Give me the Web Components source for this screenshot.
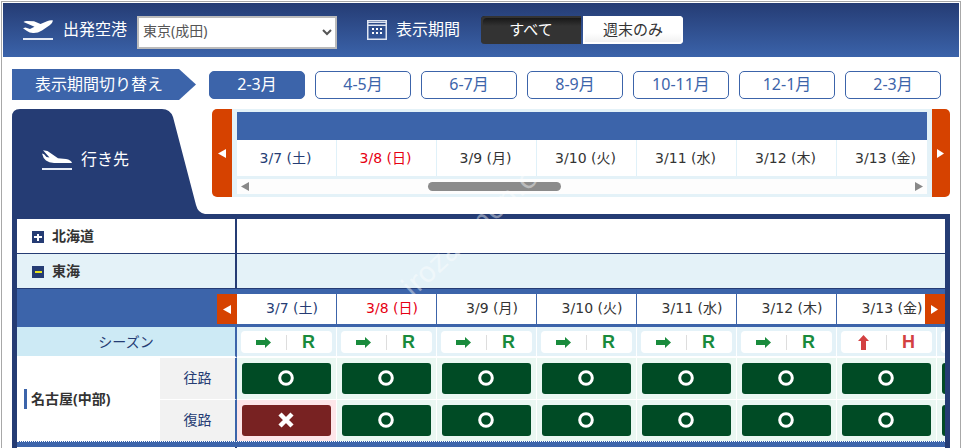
<!DOCTYPE html>
<html lang="ja">
<head>
<meta charset="utf-8">
<title>航空券カレンダー</title>
<style>
:root{--navy:#253c74;--blue:#3c64aa;--orange:#d64200;--pale:#e4f2f8;--line:#e0f1f9}
body{margin:0;background:#fff;color:#333;font:14px/20px "Noto Sans","Noto Sans CJK JP",sans-serif}
</style>
</head>
<body>
<flight-page></flight-page>
<script>
const define = (name, html) => customElements.define(name, class extends HTMLElement {
  connectedCallback() {
    if (this.shadowRoot) return;
    const t = document.createElement('template');
    t.innerHTML = typeof html === 'function' ? html(this) : html;
    this.attachShadow({mode: 'open'}).append(t.content.cloneNode(true));
  }
});

const days = [['3/7','土','sat'],['3/8','日','sun'],['3/9','月',''],['3/10','火',''],['3/11','水',''],['3/12','木',''],['3/13','金','']];

define('plane-icon', el => `
<style>:host{display:block;width:30px;height:20px;flex:none}svg{display:block}</style>
<svg width="30" height="20" viewBox="0 0 30 20" fill="#fff" aria-hidden="true">
${el.getAttribute('kind') === 'up'
 ? '<path d="M.5 2Q2 .8 4 1L11 1.300 17.500 4 24 1.200Q27 0 30 .4 29.500 3 27 5L19 10.500Q14.500 13.300 10 13 6.500 12.800 4 11L0 8.300 2.500 7.400 7 9 11.500 6.800Z"/>'
 : '<path d="M1 .2L5.500 .9 16 8.300 24 9Q29 9.800 30 13H12Q7 12.800 4 10.500 1 8 0 3.500L2 4.200 4.500 7 7.500 7.600Z"/>'}
<path fill="#e6ebf5" d="M0 18h30v2H0z"/></svg>`);

define('calendar-icon', `
<style>:host{display:block;width:20px;height:20px;flex:none}svg{display:block}</style>
<svg width="20" height="20" aria-hidden="true"><path d="M.75.75h18.5v18.5H.75z" fill="none" stroke="#dfe5f2" stroke-width="1.5"/><path d="M1 2h18v1H1zM1 4.5h18V6H1z" fill="#dfe5f2"/><path fill="#fff" d="M5 8h2v2H5zM9 8h2v2H9zM13 8h2v2h-2zM5 12h2v2H5zM9 12h2v2H9zM13 12h2v2h-2z"/></svg>`);

define('search-bar', `
<style>
:host{display:flex;align-items:center;height:54px;padding:0 20px;background:linear-gradient(var(--navy),#3b63aa);color:#fff;font-size:16px}
plane-icon{margin-right:10px}
label,span{padding-bottom:2px}
select{width:200px;height:33px;margin:4px 30px 0 10px;padding:0 0 3px;border:2px solid #bbb;background:#fff;color:#555;font:14px "Noto Sans","Noto Sans CJK JP",sans-serif}
calendar-icon{margin-right:9px}
.group{display:flex;gap:2px;margin-left:21px}
button{width:100px;height:28px;padding:0 0 3px;border:0;font:15px/20px "Noto Sans","Noto Sans CJK JP",sans-serif}
.on{background:linear-gradient(#111,#333 10px);box-shadow:inset 2px 2px #333;color:#fff;border-radius:4px 0 0 4px}
.off{background:linear-gradient(#fff 60%,#eee);box-shadow:inset 0 0 0 2px #fff;color:#333;border-radius:0 4px 4px 0}
</style>
<plane-icon kind="up"></plane-icon><label for="from">出発空港</label>
<select id="from"><option>東京(成田)</option></select>
<calendar-icon></calendar-icon><span>表示期間</span>
<div class="group"><button class="on" aria-pressed="true">すべて</button><button class="off" aria-pressed="false">週末のみ</button></div>`);

define('period-tabs', `
<style>
:host{display:flex;align-items:center;margin:12px 9px 0}
.label{box-sizing:border-box;width:184px;height:31px;padding-left:23px;margin-right:13px;background:var(--blue);clip-path:polygon(0 0,167px 0,100% 50%,167px 100%,0 100%);color:#fff;font-size:16px;line-height:31px;flex:none}
nav{display:flex;gap:10px}
button{box-sizing:border-box;width:96px;height:28px;padding:0 0 1px;border:1px solid var(--blue);border-radius:5px;background:#fff;color:var(--blue);font:16px/24px "Noto Sans","Noto Sans CJK JP",sans-serif;white-space:nowrap}
button[aria-pressed]{background:var(--blue);color:#fff}
</style>
<div class="label">表示期間切り替え</div>
<nav><button aria-pressed="true">2-3月</button>${['4-5','6-7','8-9','10-11','12-1','2-3'].map(m => `<button>${m}月</button>`).join('')}</nav>`);

define('scroll-arrow', el => `
<style>
:host{display:flex;flex:none;width:20px}
button{width:100%;padding:0;border:0;background:var(--orange);border-radius:var(--arrow-radius,0);display:flex;align-items:center;justify-content:center}
</style>
<button aria-label="${el.getAttribute('dir') === 'left' ? '前へ' : '次へ'}"><svg width="8" height="10" fill="#fff"><path d="${el.getAttribute('dir') === 'left' ? 'M8 1v9L0 5.5z' : 'M0 1v9l7-4.500z'}"/></svg></button>`);

define('date-strip', `
<style>
:host{display:flex;overflow:hidden;min-width:0;background:#fff}
div{box-sizing:border-box;flex:0 0 100px;border-right:1px solid var(--cell-line,var(--line));padding:0 2px var(--cell-drop,0) var(--cell-indent,0);text-align:center;white-space:nowrap;font:14px/var(--cell-line-height,36px) "DejaVu Sans","Noto Sans CJK JP",sans-serif}
.sat{color:var(--navy)}.sun{color:#e60012}
</style>
${days.map(d => `<div class="${d[2]}">${d[0]} (${d[1]})</div>`).join('')}`);

define('destination-tab', `
<style>
:host{display:grid;width:193px;height:105px;flex:none;color:#fff}
svg,.in{grid-area:1/1}
svg{display:block}
.in{display:flex;align-items:center;gap:9px;padding:0 0 6px 30px;font-size:16px}
plane-icon{margin-top:2px}
</style>
<svg width="193" height="105" aria-hidden="true"><path fill="#253c74" d="M0 105V8Q0 0 8 0H150Q158 0 161 8L184 96Q186 104 193 105Z"/></svg>
<div class="in"><plane-icon kind="down"></plane-icon><span>行き先</span></div>`);

define('date-scroller', `
<style>
:host{display:flex;flex:1;min-width:0;height:88px;margin-left:7px}
.mid{flex:1;min-width:0;padding:3px 5px;background:var(--pale)}
.bar{height:28px;background:var(--blue)}
.track{display:flex;align-items:center;justify-content:space-between;height:15px;margin-top:3px;padding:0 4px;background:#fdfdfd}
.thumb{width:133px;height:9px;border-radius:5px;background:#8b8b8b;margin-right:176px}
.l{--arrow-radius:5px 0 0 5px}.r{--arrow-radius:0 5px 5px 0;width:18px}
</style>
<scroll-arrow class="l" dir="left"></scroll-arrow>
<div class="mid"><div class="bar"></div><date-strip></date-strip>
<div class="track"><svg width="8" height="9" fill="#888"><path d="M8 0v9L0 4.500z"/></svg><div class="thumb"></div><svg width="8" height="9" fill="#888"><path d="M0 0v9l8-4.500z"/></svg></div></div>
<scroll-arrow class="r" dir="right"></scroll-arrow>`);

define('region-row', el => `
<style>
:host{display:grid;grid-template-columns:218px 1fr;height:34px;border-bottom:1px solid var(--navy);background:#fff}
:host([open]){background:var(--pale)}
.name{display:flex;align-items:center;gap:8px;padding-left:15px;font-weight:700}
.rest{border-left:2px solid var(--navy)}
button{width:12px;height:12px;padding:0;border:0;background:var(--navy);margin-top:2px}
svg{display:block}
</style>
<div class="name">${el.hasAttribute('blank') ? '' : `<button aria-label="開閉"><svg width="12" height="12">${el.hasAttribute('open') ? '<path fill="#e8e41c" d="M3 5h7v2H3z"/>' : '<path fill="#fff" d="M5 3h2v2h3v2H7v3H5V7H2V5h3z"/>'}</svg></button>`}<slot></slot></div><div class="rest"></div>`);

define('season-chip', el => { const up = el.hasAttribute('high'); return `
<style>
:host{display:grid;grid-template-columns:45px 1px 43px;align-items:center;justify-items:center;width:91px;height:22px;background:#fff;border-radius:4px;color:${up ? '#d34142' : '#198b3c'};font:700 18px/22px "Liberation Sans",Arial,sans-serif}
i{width:1px;height:15px;background:#ddd}
</style>
${el.hasAttribute('empty') ? '' : `<svg width="15" height="15" fill="currentColor" aria-hidden="true"><path d="${up ? 'M7.500 0l5.500 6H10v9H5V6H2z' : 'M0 5h9V2l6 5.500L9 13v-3H0z'}"/></svg><i></i><span>${up ? 'H' : 'R'}</span>`}`; });

define('seat-button', el => `
<style>
:host{display:block}
button{display:flex;align-items:center;justify-content:center;width:89px;height:31px;padding:0 1px 1px 0;border:0;border-radius:3px;background:#004b25}
:host([full]) button{background:#782222}
</style>
<button aria-label="${el.hasAttribute('full') ? '空席なし' : '空席あり'}"><svg width="16" height="16" fill="none" stroke="#fff">${el.hasAttribute('full') ? '<path stroke-width="4.500" d="M2 2l12 12M14 2L2 14"/>' : '<circle cx="8" cy="8" r="6.300" stroke-width="3"/>'}</svg></button>`);

define('fare-table', `
<style>
:host{display:block;overflow:hidden;background:#fff}
table{width:1020px;table-layout:fixed;border-collapse:separate;border-spacing:0}
th,td{padding:0;font-weight:400;border-right:1px solid #fff;vertical-align:top}
.season{height:29px;background:#cdeaf5;color:var(--navy);text-align:center;vertical-align:middle}
thead th,thead td{border-bottom:2px solid #fff}
thead td{background:var(--pale);padding:4px 0 0 4px}
.season,.way{border-right:2px solid var(--blue)}
.city{vertical-align:middle;text-align:left;font-weight:700;padding:0 0 2px 7px;border:0;white-space:nowrap}
.city span{display:block;border-left:3px solid var(--blue);padding-left:4px}
.way{padding-bottom:2px;background:#f2f2f2;color:var(--navy);vertical-align:middle;text-align:center}
tbody td{height:36px;padding:5px 0 0 5px;background:#eaf7f2}
td.full{background:#fde6e9}
tbody tr:first-child td,tbody tr:first-child .way{border-bottom:1px solid #fff}
</style>
<table>
<colgroup><col style="width:143px"><col style="width:77px">${'<col style="width:100px">'.repeat(8)}</colgroup>
<thead><tr><th class="season" colspan="2" scope="row">シーズン</th>${'<td><season-chip></season-chip></td>'.repeat(6)}<td><season-chip high></season-chip></td><td><season-chip empty></season-chip></td></tr></thead>
<tbody>
<tr><th class="city" rowspan="2" scope="rowgroup"><span>名古屋(中部)</span></th><th class="way" scope="row">往路</th>${'<td><seat-button></seat-button></td>'.repeat(8)}</tr>
<tr><th class="way" scope="row">復路</th><td class="full"><seat-button full></seat-button></td>${'<td><seat-button></seat-button></td>'.repeat(7)}</tr>
</tbody></table>`);

define('result-panel', `
<style>
:host{display:block;margin:0 9px;border:5px solid var(--navy);border-bottom:0}
.dates{display:flex;padding:5px 0 3px 200px;background:var(--blue)}
date-strip{flex:1;--cell-line-height:28px;--cell-drop:2px;--cell-line:var(--blue);--cell-indent:13px}
.end{height:5px;border-top:1px dotted #fff;background:var(--blue)}
</style>
<region-row>北海道</region-row>
<region-row open>東海</region-row>
<div class="dates"><scroll-arrow dir="left"></scroll-arrow><date-strip></date-strip><scroll-arrow dir="right"></scroll-arrow></div>
<fare-table></fare-table>
<div class="end"></div>
<region-row blank></region-row>`);

define('flight-page', `
<style>
:host{display:block;position:relative;box-sizing:border-box;height:100vh;overflow:hidden;padding:1px 4px 0 1px}
main{border:1px solid #a8a8a8;border-bottom:0;padding:1px}
.heads{display:flex;margin:9px 9px 0}
.mark{position:absolute;left:416px;top:274px;transform-origin:0 100%;transform:rotate(-43deg);font:28px/28px "DejaVu Sans",sans-serif;color:#fff;opacity:.42;pointer-events:none;white-space:nowrap}
</style>
<main>
<search-bar></search-bar>
<period-tabs></period-tabs>
<div class="heads"><destination-tab></destination-tab><date-scroller></date-scroller></div>
<result-panel></result-panel>
</main>
<div class="mark" aria-hidden="true">irozaemon.c</div>`);
</script>
</body>
</html>
